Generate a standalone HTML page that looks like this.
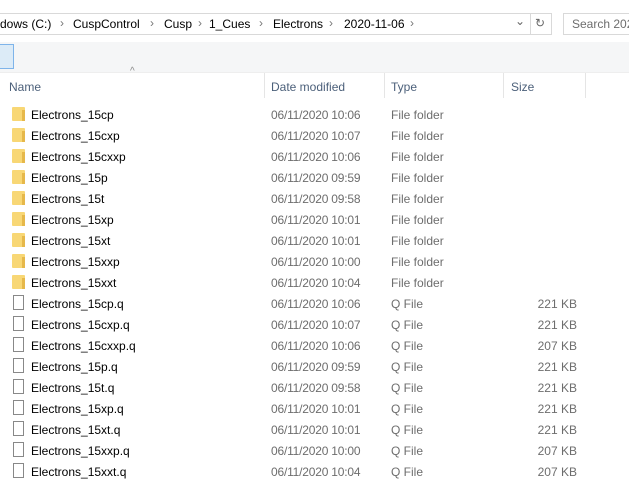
<!DOCTYPE html><html><head><style>
body{margin:0;width:629px;height:490px;background:#fff;font-family:"Liberation Sans",sans-serif;font-size:12px;overflow:hidden;position:relative}
.a{position:absolute;white-space:nowrap}
.c{position:absolute;top:17px;white-space:nowrap;color:#000}
.g{position:absolute;top:16px;color:#777;font-size:12px}
.row{position:absolute;left:0;width:629px;height:21px}
.row span{position:absolute;top:4px;white-space:nowrap}
.n{left:31px;color:#000}
.d{left:271px;color:#6d6d6d;letter-spacing:-0.2px}
.t{left:391px;color:#6d6d6d}
.s{right:52px;color:#6d6d6d}
.fo{position:absolute;left:12px;top:3px;width:13px;height:14px;background:#f8d775;border-radius:1px}
.fo:after{content:"";position:absolute;right:0;bottom:0;width:3px;height:11px;background:#e6b84a}
.fi{position:absolute;left:13px;top:2px;width:11px;height:15px;border:1px solid #888;box-sizing:border-box;background:#fff}
</style></head><body>
<div class="a" style="left:-2px;top:13px;width:554px;height:22px;border:1px solid #d9d9d9;box-sizing:border-box"></div>
<span class="c" style="left:0">dows (C:)</span><span class="g" style="left:60px">›</span>
<span class="c" style="left:73px">CuspControl</span><span class="g" style="left:150px">›</span>
<span class="c" style="left:164px">Cusp</span><span class="g" style="left:198px">›</span>
<span class="c" style="left:209px">1_Cues</span><span class="g" style="left:259px">›</span>
<span class="c" style="left:273px">Electrons</span><span class="g" style="left:329px">›</span>
<span class="c" style="left:344px">2020-11-06</span><span class="g" style="left:410px">›</span>
<div class="a" style="left:515px;top:14px;color:#666">⌄</div>
<div class="a" style="left:530px;top:13px;width:1px;height:22px;background:#d9d9d9"></div>
<div class="a" style="left:535px;top:16px;color:#666">↻</div>
<div class="a" style="left:563px;top:13px;width:70px;height:22px;border:1px solid #d9d9d9;box-sizing:border-box"></div>
<div class="a" style="left:572px;top:17px;color:#6d6d6d">Search 2020</div>
<div class="a" style="left:0;top:42px;width:629px;height:30px;background:#f5f6f7"></div>
<div class="a" style="left:-2px;top:44px;width:16px;height:25px;background:#dcebf7;border:1px solid #7eb4ea;box-sizing:border-box"></div>
<div class="a" style="left:0;top:72px;width:629px;height:1px;background:#eee"></div>
<div class="a" style="left:130px;top:66px;color:#888;font-size:10px">^</div>
<div class="a" style="left:9px;top:80px;color:#4c607a">Name</div>
<div class="a" style="left:271px;top:80px;color:#4c607a">Date modified</div>
<div class="a" style="left:391px;top:80px;color:#4c607a">Type</div>
<div class="a" style="left:511px;top:80px;color:#4c607a">Size</div>
<div class="a" style="left:264px;top:73px;width:1px;height:25px;background:#e5e5e5"></div>
<div class="a" style="left:384px;top:73px;width:1px;height:25px;background:#e5e5e5"></div>
<div class="a" style="left:503px;top:73px;width:1px;height:25px;background:#e5e5e5"></div>
<div class="a" style="left:585px;top:73px;width:1px;height:25px;background:#e5e5e5"></div>
<div class="row" style="top:104px"><i class="fo"></i><span class="n">Electrons_15cp</span><span class="d">06/11/2020 10:06</span><span class="t">File folder</span></div>
<div class="row" style="top:125px"><i class="fo"></i><span class="n">Electrons_15cxp</span><span class="d">06/11/2020 10:07</span><span class="t">File folder</span></div>
<div class="row" style="top:146px"><i class="fo"></i><span class="n">Electrons_15cxxp</span><span class="d">06/11/2020 10:06</span><span class="t">File folder</span></div>
<div class="row" style="top:167px"><i class="fo"></i><span class="n">Electrons_15p</span><span class="d">06/11/2020 09:59</span><span class="t">File folder</span></div>
<div class="row" style="top:188px"><i class="fo"></i><span class="n">Electrons_15t</span><span class="d">06/11/2020 09:58</span><span class="t">File folder</span></div>
<div class="row" style="top:209px"><i class="fo"></i><span class="n">Electrons_15xp</span><span class="d">06/11/2020 10:01</span><span class="t">File folder</span></div>
<div class="row" style="top:230px"><i class="fo"></i><span class="n">Electrons_15xt</span><span class="d">06/11/2020 10:01</span><span class="t">File folder</span></div>
<div class="row" style="top:251px"><i class="fo"></i><span class="n">Electrons_15xxp</span><span class="d">06/11/2020 10:00</span><span class="t">File folder</span></div>
<div class="row" style="top:272px"><i class="fo"></i><span class="n">Electrons_15xxt</span><span class="d">06/11/2020 10:04</span><span class="t">File folder</span></div>
<div class="row" style="top:293px"><i class="fi"></i><span class="n">Electrons_15cp.q</span><span class="d">06/11/2020 10:06</span><span class="t">Q File</span><span class="s">221 KB</span></div>
<div class="row" style="top:314px"><i class="fi"></i><span class="n">Electrons_15cxp.q</span><span class="d">06/11/2020 10:07</span><span class="t">Q File</span><span class="s">221 KB</span></div>
<div class="row" style="top:335px"><i class="fi"></i><span class="n">Electrons_15cxxp.q</span><span class="d">06/11/2020 10:06</span><span class="t">Q File</span><span class="s">207 KB</span></div>
<div class="row" style="top:356px"><i class="fi"></i><span class="n">Electrons_15p.q</span><span class="d">06/11/2020 09:59</span><span class="t">Q File</span><span class="s">221 KB</span></div>
<div class="row" style="top:377px"><i class="fi"></i><span class="n">Electrons_15t.q</span><span class="d">06/11/2020 09:58</span><span class="t">Q File</span><span class="s">221 KB</span></div>
<div class="row" style="top:398px"><i class="fi"></i><span class="n">Electrons_15xp.q</span><span class="d">06/11/2020 10:01</span><span class="t">Q File</span><span class="s">221 KB</span></div>
<div class="row" style="top:419px"><i class="fi"></i><span class="n">Electrons_15xt.q</span><span class="d">06/11/2020 10:01</span><span class="t">Q File</span><span class="s">221 KB</span></div>
<div class="row" style="top:440px"><i class="fi"></i><span class="n">Electrons_15xxp.q</span><span class="d">06/11/2020 10:00</span><span class="t">Q File</span><span class="s">207 KB</span></div>
<div class="row" style="top:461px"><i class="fi"></i><span class="n">Electrons_15xxt.q</span><span class="d">06/11/2020 10:04</span><span class="t">Q File</span><span class="s">207 KB</span></div>
</body></html>
